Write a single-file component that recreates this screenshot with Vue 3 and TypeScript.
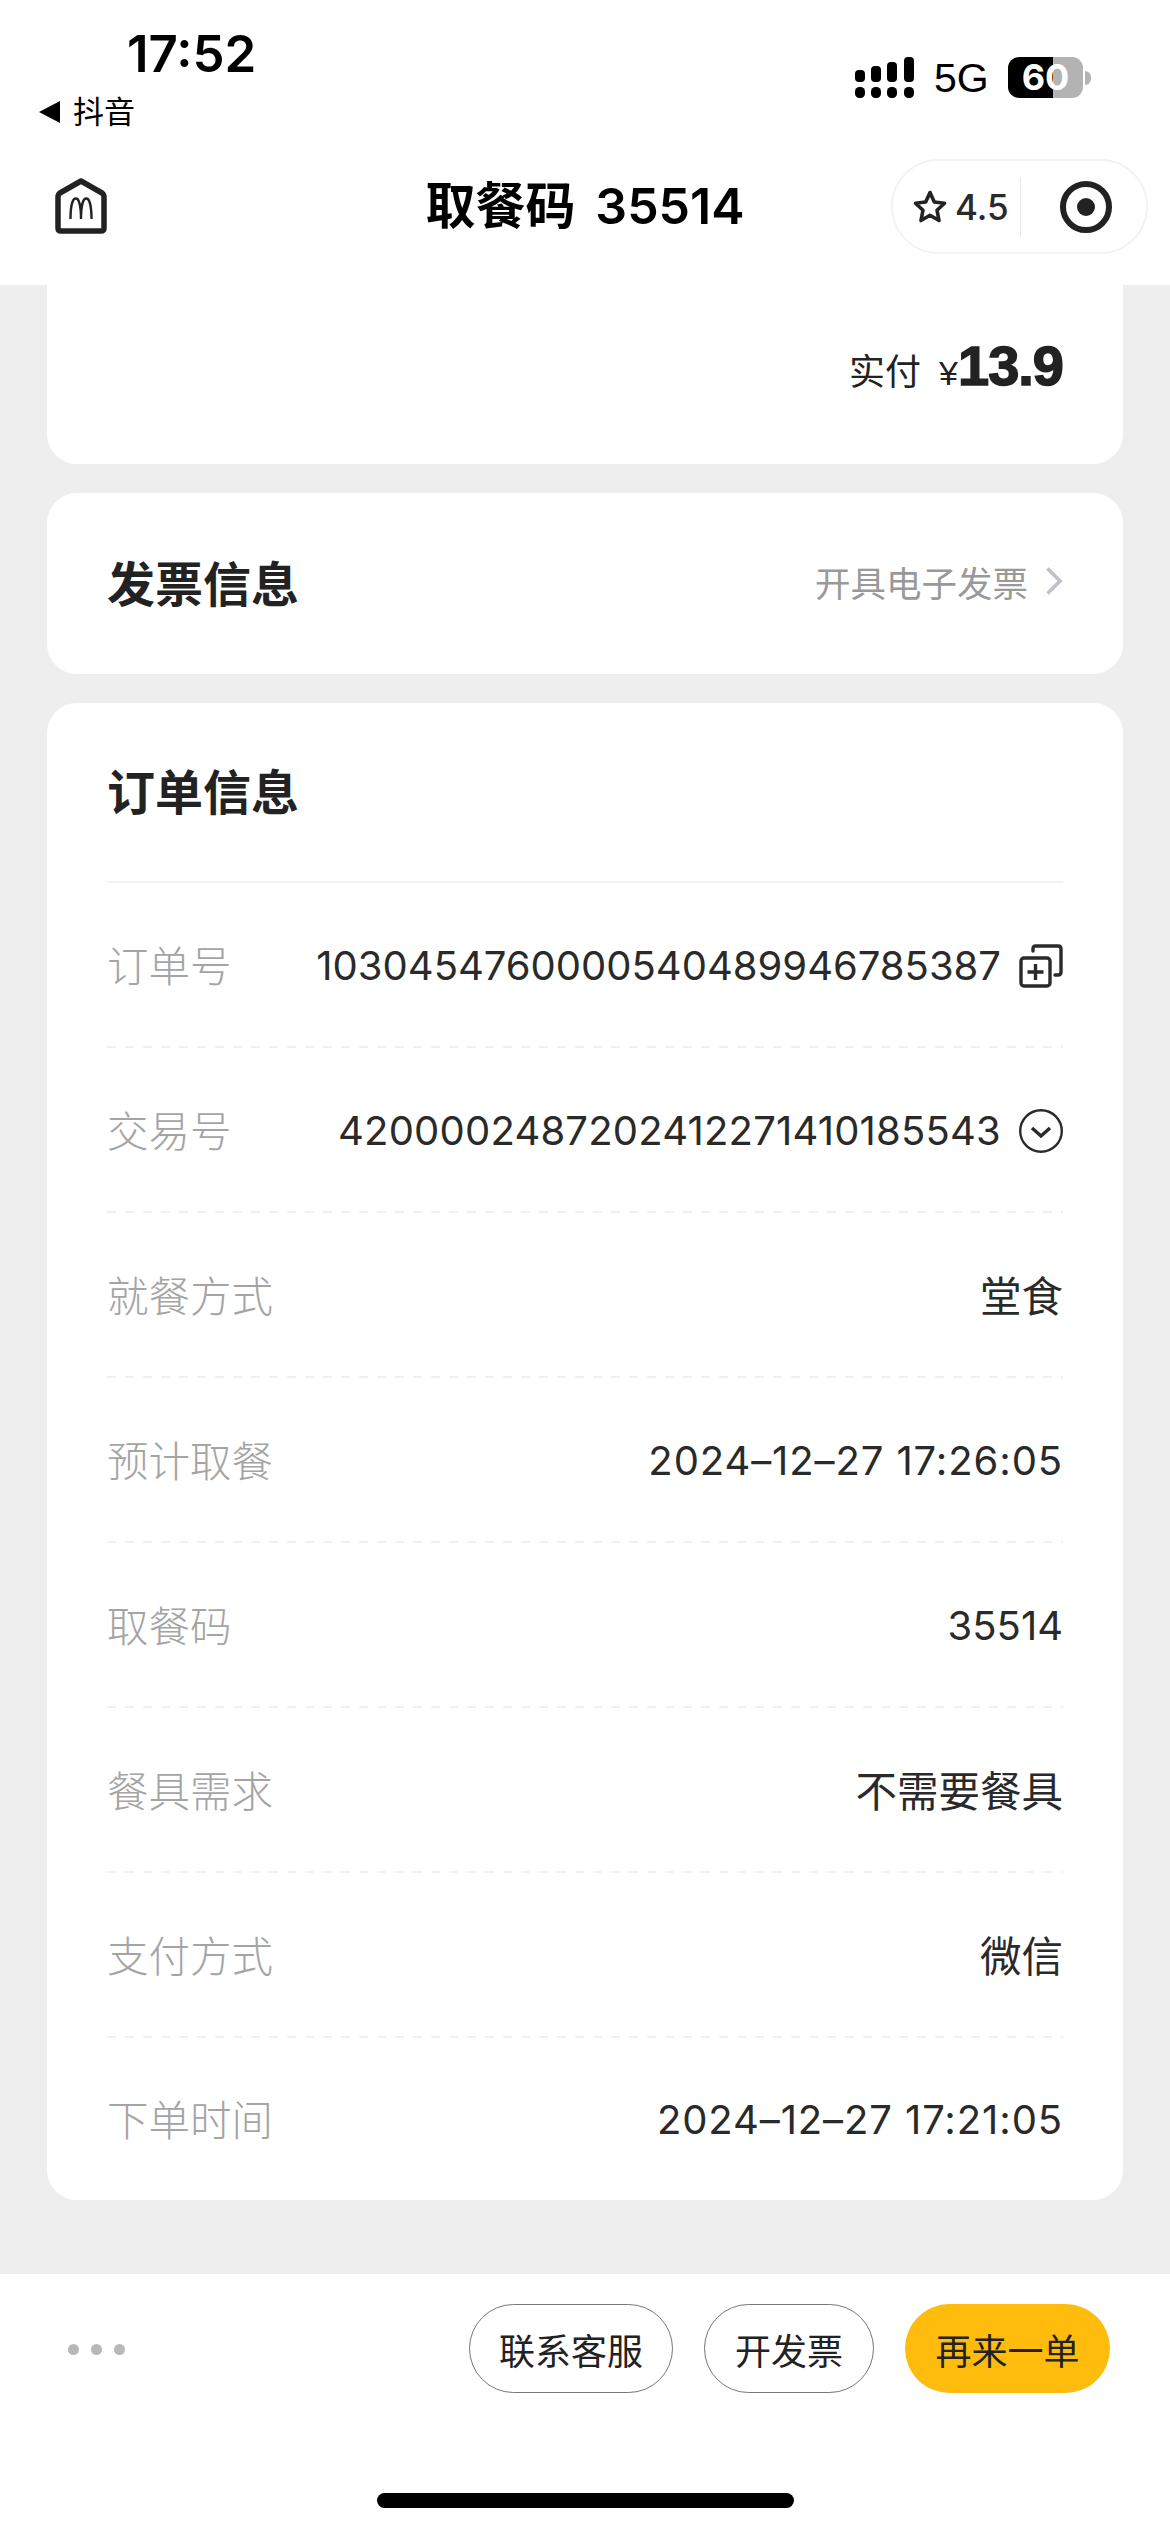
<script setup lang="ts">
interface Row { label: string; value: string; icon?: 'copy' | 'down'; kind?: 'cjk' | 'date' | 'ones' }
const rows: Row[] = [
  { label: '订单号', value: '1030454760000540489946785387', icon: 'copy' },
  { label: '交易号', value: '4200002487202412271410185543', icon: 'down', kind: 'ones' },
  { label: '就餐方式', value: '堂食', kind: 'cjk' },
  { label: '预计取餐', value: '2024–12–27 17:26:05', kind: 'date' },
  { label: '取餐码', value: '35514' },
  { label: '餐具需求', value: '不需要餐具', kind: 'cjk' },
  { label: '支付方式', value: '微信', kind: 'cjk' },
  { label: '下单时间', value: '2024–12–27 17:21:05', kind: 'date' },
]
</script>

<template>
  <div class="page">
    <header class="top">
      <div class="status">
        <div class="status-left">
          <div class="time">17:52</div>
          <div class="back"><span class="tri"></span><span>抖音</span></div>
        </div>
        <div class="status-right">
          <svg class="signal" width="60" height="42" viewBox="0 0 60 42" fill="#000">
            <rect x="0" y="13" width="10" height="12" rx="4" />
            <rect x="0" y="30" width="10" height="11" rx="4.5" />
            <rect x="16" y="9" width="10" height="16" rx="4" />
            <rect x="16" y="30" width="10" height="11" rx="4.5" />
            <rect x="32" y="5" width="10" height="20" rx="4" />
            <rect x="32" y="30" width="10" height="11" rx="4.5" />
            <rect x="49" y="0" width="10" height="25" rx="4" />
            <rect x="49" y="30" width="10" height="11" rx="4.5" />
          </svg>
          <span class="net">5G</span>
          <div class="battery"><span>60</span></div>
          <span class="nub"></span>
        </div>
      </div>
      <nav class="nav">
        <svg class="logo" width="52" height="56" viewBox="0 0 52 56">
          <path d="M26 3 L47 15 Q49 16.500 49 19 V50 Q49 53 46 53 H6 Q3 53 3 50 V19 Q3 16.500 5 15 Z" fill="none" stroke="#222" stroke-width="5.500" stroke-linejoin="round" />
          <path d="M15.500 41 C15.500 28 17.500 20.500 20.800 20.500 C24 20.500 26 28 26 41 C26 28 28 20.500 31.200 20.500 C34.500 20.500 36.500 28 36.500 41" fill="none" stroke="#222" stroke-width="2.400" />
        </svg>
        <h1 class="title">取餐码 <span class="title-num">35514</span></h1>
        <div class="capsule">
          <svg width="36" height="36" viewBox="0 0 36 36" class="star">
            <path d="M18 3.500 L22.300 13 L32.500 14.200 L25 21.200 L27 31.500 L18 26.300 L9 31.500 L11 21.200 L3.500 14.200 L13.700 13 Z" fill="none" stroke="#222" stroke-width="3.600" stroke-linejoin="round" />
          </svg>
          <span class="rate">4.5</span>
          <span class="divider"></span>
          <span class="target"><span class="dot"></span></span>
        </div>
      </nav>
    </header>

    <main class="content">
      <section class="card pay">
        <span class="pay-label">实付</span>
        <span class="yen">¥</span>
        <span class="amount">13.9</span>
      </section>

      <section class="card invoice">
        <h2 class="heading">发票信息</h2>
        <div class="invoice-link">
          <span>开具电子发票</span>
          <svg width="18" height="30" viewBox="0 0 18 30">
            <path d="M2.500 2.500 L15 15 L2.500 27.500" fill="none" stroke="#c0c0cb" stroke-width="3.600" />
          </svg>
        </div>
      </section>

      <section class="card order">
        <h2 class="heading order-head">订单信息</h2>
        <div v-for="row in rows" :key="row.label" class="row">
          <span class="label">{{ row.label }}</span>
          <span class="value" :class="row.kind">
            <span>{{ row.value }}</span>
            <svg v-if="row.icon === 'copy'" class="row-icon" width="44" height="44" viewBox="0 0 44 44">
              <path d="M14 7 V4.500 Q14 2 16.500 2 H39 Q42 2 42 5 V28 Q42 31 39 31 H36" fill="none" stroke="#2a2a2a" stroke-width="3.400" stroke-linecap="round" />
              <rect x="2" y="14" width="29" height="28" rx="3" fill="none" stroke="#2a2a2a" stroke-width="3.400" />
              <path d="M16.500 20 V36 M8.500 28 H24.500" fill="none" stroke="#2a2a2a" stroke-width="3.400" />
            </svg>
            <svg v-else-if="row.icon === 'down'" class="row-icon" width="44" height="44" viewBox="0 0 44 44">
              <circle cx="22" cy="22" r="20.800" fill="none" stroke="#2a2a2a" stroke-width="2.400" />
              <path d="M13 19 L22 27 L31 19" fill="none" stroke="#2a2a2a" stroke-width="3.400" />
            </svg>
          </span>
        </div>
      </section>
    </main>

    <footer class="footer">
      <div class="actions">
        <div class="dots"><i></i><i></i><i></i></div>
        <div class="buttons">
          <button class="btn w1">联系客服</button>
          <button class="btn w2">开发票</button>
          <button class="btn primary">再来一单</button>
        </div>
      </div>
      <div class="home"></div>
    </footer>
  </div>
</template>

<style scoped>
.page {
  width: 1170px;
  height: 2532px;
  display: flex;
  flex-direction: column;
  overflow: hidden;
  background: #eeeeee;
  color: #222;
  font-family: Inter, "Noto Sans CJK SC", sans-serif;
}
.top {
  height: 285px;
  flex: none;
  background: #fff;
}
.status {
  height: 159px;
  display: flex;
  justify-content: space-between;
}
.status-left {
  padding: 25px 0 0 39px;
}
.time {
  margin-left: 88px;
  font-size: 51px;
  font-weight: 600;
  line-height: 58px;
  color: #000;
}
.back {
  display: flex;
  align-items: center;
  gap: 13px;
  font-size: 31px;
  line-height: 40px;
  color: #000;
  margin-top: 9px;
}
.tri {
  width: 0;
  height: 0;
  border-style: solid;
  border-width: 11px 21px 11px 0;
  border-color: transparent #000 transparent transparent;
}
.status-right {
  display: flex;
  align-items: flex-start;
  padding: 57px 79px 0 0;
}
.net {
  margin-left: 19px;
  font-family: "Liberation Sans", sans-serif;
  font-size: 41px;
  line-height: 42px;
  color: #000;
  width: 74px;
}
.battery {
  width: 75px;
  height: 41px;
  border-radius: 11px;
  background: linear-gradient(90deg, #000 60%, #b3b3b3 60%);
  color: #fff;
  font-size: 36px;
  font-weight: 700;
  line-height: 41px;
  text-align: center;
}
.nub {
  width: 6px;
  height: 14px;
  margin: 14px 0 0 2px;
  border-radius: 0 7px 7px 0;
  background: #b3b3b3;
}
.nav {
  position: relative;
  height: 126px;
  display: flex;
  align-items: flex-start;
  justify-content: space-between;
  padding: 0 22px 0 55px;
}
.logo {
  margin-top: 19px;
}
.title {
  position: absolute;
  left: 0;
  right: 0;
  top: 11px;
  margin: 0;
  text-align: center;
  font-size: 50px;
  font-weight: 700;
  line-height: 72px;
  color: #000;
}
.title-num {
  margin-left: 8px;
  font-size: 50px;
  font-weight: 600;
}
.capsule {
  position: relative;
  box-sizing: border-box;
  width: 257px;
  height: 95px;
  border: 2px solid #f2f2f2;
  border-radius: 48px;
  background: #fff;
  display: flex;
  align-items: center;
  padding-left: 19px;
}
.star {
  flex: none;
}
.rate {
  margin-left: 7px;
  font-size: 35px;
  font-weight: 500;
  line-height: 42px;
  color: #2a2a2a;
}
.divider {
  margin-left: 11px;
  width: 1px;
  height: 60px;
  background: #e8e8e8;
}
.target {
  margin-left: 39px;
  box-sizing: border-box;
  width: 52px;
  height: 52px;
  border: 6px solid #222;
  border-radius: 50%;
  display: flex;
  align-items: center;
  justify-content: center;
}
.dot {
  width: 18px;
  height: 18px;
  border-radius: 50%;
  background: #222;
}
.content {
  flex: 1;
  min-height: 0;
  padding: 0 47px;
  display: flex;
  flex-direction: column;
  gap: 29px;
}
.card {
  background: #fff;
  border-radius: 30px;
}
.pay {
  height: 179px;
  box-sizing: border-box;
  border-radius: 0 0 30px 30px;
  padding: 48px 60px 0 0;
  display: flex;
  justify-content: flex-end;
  align-items: baseline;
}
.pay-label {
  font-size: 36px;
}
.yen {
  margin-left: 18px;
  font-family: "Liberation Sans", sans-serif;
  font-size: 34px;
}
.amount {
  font-family: "Liberation Sans", sans-serif;
  font-size: 56px;
  font-weight: 700;
  letter-spacing: -1px;
  -webkit-text-stroke: 1.500px #222;
}
.invoice {
  height: 181px;
  box-sizing: border-box;
  display: flex;
  align-items: center;
  justify-content: space-between;
  padding: 0 60px 5px;
}
.heading {
  margin: 0;
  font-size: 48px;
  font-weight: 700;
  color: #222;
}
.invoice-link {
  display: flex;
  align-items: center;
  gap: 17px;
  font-size: 35.500px;
  color: #999;
}
.order {
  padding: 0 60px;
}
.order-head {
  height: 180px;
  box-sizing: border-box;
  padding-top: 56px;
  line-height: 68px;
  border-bottom: 2px solid #f2f2f2;
}
.row {
  height: 165px;
  box-sizing: border-box;
  display: flex;
  align-items: center;
  justify-content: space-between;
  background-image: repeating-linear-gradient(90deg, #f0f0f0 0 9px, transparent 9px 18px);
  background-size: 100% 2px;
  background-repeat: no-repeat;
  background-position: left bottom;
}
.row:last-child {
  height: 162px;
  background-image: none;
}
.label {
  padding-bottom: 3px;
  font-size: 41.500px;
  font-weight: 300;
  color: #a4a4a4;
}
.value {
  display: flex;
  align-items: center;
  font-size: 40px;
  color: #2a2a2a;
}
.value.cjk {
  padding-bottom: 3px;
  font-size: 41.500px;
}
.value.date {
  letter-spacing: 0.9px;
}
.value.ones {
  letter-spacing: 0.2px;
}
.row-icon {
  margin-left: 18px;
}
.footer {
  flex: none;
  height: 258px;
  background: #fff;
}
.actions {
  display: flex;
  justify-content: space-between;
  align-items: center;
  padding: 30px 60px 0 68px;
}
.dots {
  display: flex;
  gap: 12px;
  margin-top: 2px;
}
.dots i {
  width: 11px;
  height: 11px;
  border-radius: 50%;
  background: #b8b8b8;
}
.buttons {
  display: flex;
  gap: 31px;
}
.btn {
  box-sizing: border-box;
  height: 89px;
  border: 1.500px solid #777;
  border-radius: 45px;
  background: #fff;
  color: #222;
  font-family: inherit;
  font-size: 36px;
  padding: 0;
}
.w1 {
  width: 204px;
}
.w2 {
  width: 170px;
}
.primary {
  width: 205px;
  border: none;
  background: #ffbc0d;
}
.home {
  width: 417px;
  height: 15px;
  margin: 100px auto 0;
  border-radius: 8px;
  background: #000;
}
</style>
